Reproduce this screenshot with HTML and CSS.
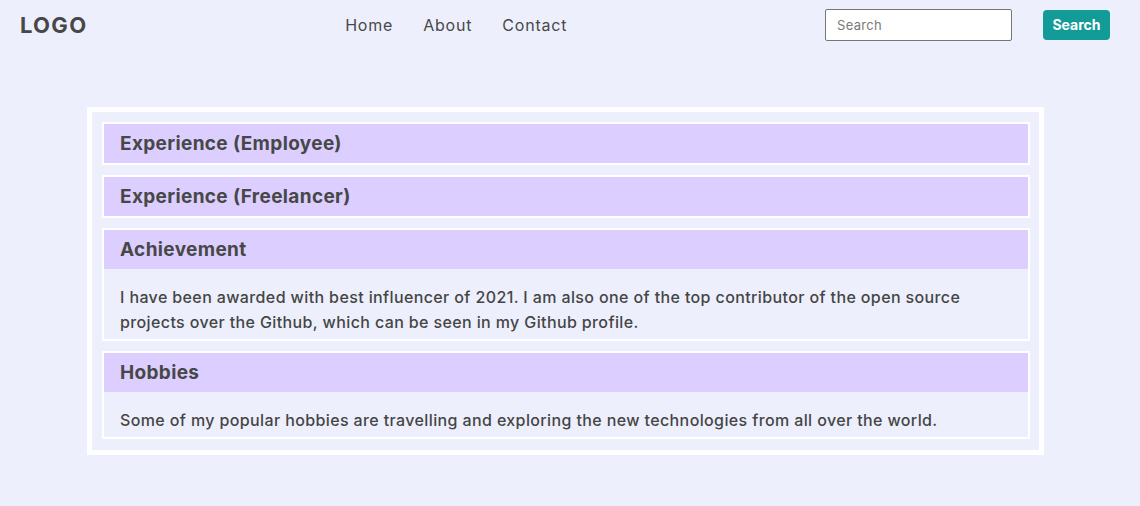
FILE: index.html
```html
<!DOCTYPE html>
<html lang="en">
<head>
<meta charset="utf-8">
<title>Profile</title>
<link rel="stylesheet" href="styles.css">
</head>
<body>
<nav class="navbar">
  <div class="logo">LOGO</div>
  <ul class="links">
    <li><a href="#">Home</a></li>
    <li><a href="#">About</a></li>
    <li><a href="#">Contact</a></li>
  </ul>
  <form class="search">
    <input type="text" placeholder="Search">
    <button type="button">Search</button>
  </form>
</nav>
<main class="box">
  <section class="item">
    <h2 class="item-head">Experience (Employee)</h2>
  </section>
  <section class="item">
    <h2 class="item-head">Experience (Freelancer)</h2>
  </section>
  <section class="item">
    <h2 class="item-head">Achievement</h2>
    <p class="item-body">I have been awarded with best influencer of 2021. I am also one of the top contributor of the open source projects over the Github, which can be seen in my Github profile.</p>
  </section>
  <section class="item">
    <h2 class="item-head">Hobbies</h2>
    <p class="item-body">Some of my popular hobbies are travelling and exploring the new technologies from all over the world.</p>
  </section>
</main>
</body>
</html>
```
FILE: styles.css
```css
* { box-sizing: border-box; }
html, body { margin: 0; padding: 0; }
body {
  background: #edf0fc;
  font-family: Inter, "Noto Sans", sans-serif;
  color: #484848;
  height: 506px;
}
.navbar {
  display: flex;
  align-items: center;
  justify-content: space-between;
  height: 49px;
  padding: 0 30px 0 20px;
}
.logo {
  font-size: 22px;
  font-weight: 700;
  color: #474747;
  letter-spacing: 1.3px;
}
.links {
  display: flex;
  gap: 30px;
  list-style: none;
  margin: 0;
  padding: 0;
}
.links a {
  color: #484848;
  text-decoration: none;
  font-size: 16px;
  font-weight: 400;
  letter-spacing: 0.8px;
}
.search {
  display: flex;
  align-items: center;
  gap: 31px;
  margin: 0;
}
.search input {
  width: 187px;
  height: 32px;
  border: 1px solid #767676;
  border-radius: 2px;
  padding: 0 11px;
  font-family: Inter, sans-serif;
  font-size: 13px;
  letter-spacing: 0.3px;
  background: #fff;
  color: #444;
}
.search input::placeholder { color: #7a7a7a; }
.search button {
  width: 67px;
  height: 30px;
  border: none;
  border-radius: 4px;
  background: #139b97;
  color: #fff;
  font-family: Inter, sans-serif;
  font-weight: 700;
  font-size: 14px;
  padding: 0;
}
.box {
  display: flex;
  flex-direction: column;
  gap: 10px;
  margin: 58px 96px 0 87px;
  border: 5px solid #fff;
  padding: 10px 9px 11px 10px;
}
.item {
  border: 2px solid #fff;
}
.item-head {
  margin: 0;
  height: 39px;
  line-height: 39px;
  padding: 0 16px;
  background: #dccfff;
  font-size: 19px;
  font-weight: 700;
  color: #474747;
  letter-spacing: 0.35px;
}
.item-body {
  margin: 0;
  padding: 16px 16px 4px;
  font-size: 16px;
  font-weight: 500;
  line-height: 25px;
  color: #454545;
  letter-spacing: 0.38px;
}
```
